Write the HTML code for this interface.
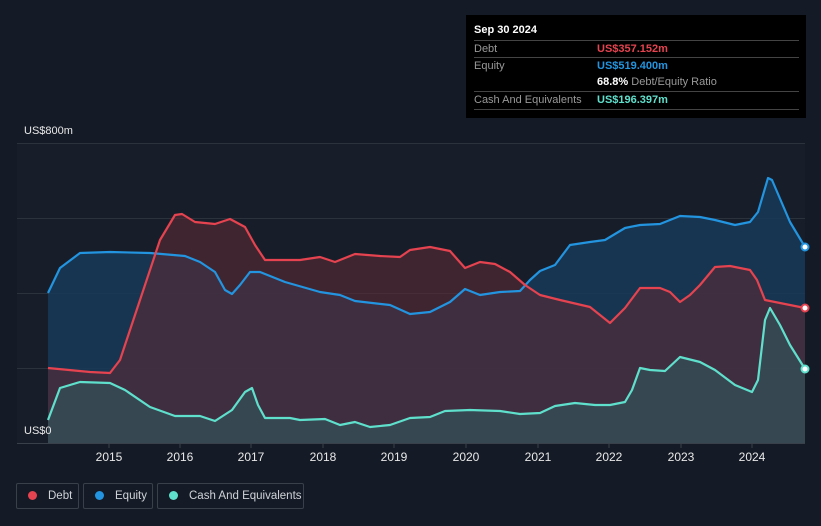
<!DOCTYPE html><html><head><style>
body{margin:0;width:821px;height:526px;background:#151b26;font-family:"Liberation Sans",sans-serif;overflow:hidden;position:relative}
.t{position:absolute;color:#e8e8e8;font-size:11px}
.tip{position:absolute;left:466px;top:15px;width:340px;height:103px;background:#000;}
.tip .r{position:absolute;left:8px;width:325px;border-top:1px solid #444;font-size:11px;color:#999;height:17px;line-height:17px}
.leg{position:absolute;top:483px;height:26px;border:1px solid #3a404a;border-radius:2px;color:#cfd3d8;font-size:11.5px;line-height:24px;box-sizing:border-box;white-space:nowrap;overflow:hidden}
.dot{display:inline-block;width:9px;height:9px;border-radius:50%;margin:0 11px 0 11px;vertical-align:-1px}
</style></head><body>
<svg width="821" height="526" style="position:absolute;left:0;top:0">
<rect x="17" y="143" width="788" height="300" fill="#181e29"/>
<g stroke="#2c323c" stroke-width="1"><line x1="17" y1="143.5" x2="805" y2="143.5"/><line x1="17" y1="218.5" x2="805" y2="218.5"/><line x1="17" y1="293.5" x2="805" y2="293.5"/><line x1="17" y1="368.5" x2="805" y2="368.5"/></g>
<path fill="#173a57" fill-opacity="0.85" d="M48,443 L48,293 L60,268 L80,253 L110,252 L150,253 L185,256 L200,262 L215,272 L225,290 L232,294 L240,285 L250,272 L260,272 L285,282 L320,292 L340,295 L355,301 L390,305 L410,314 L430,312 L450,302 L465,289 L480,295 L500,292 L520,291 L530,280 L540,271 L555,265 L570,245 L590,242 L605,240 L625,228 L640,225 L660,224 L680,216 L700,217 L715,220 L735,225 L750,222 L758,212 L768,178 L772,180 L790,222 L805,247 L805,443Z"/>
<path fill="#5a2a35" fill-opacity="0.6" d="M48,443 L48,368 L90,372 L110,373 L120,360 L140,300 L160,240 L175,215 L182,214 L195,222 L215,224 L230,219 L245,227 L255,245 L265,260 L300,260 L320,257 L335,262 L355,254 L380,256 L400,257 L410,250 L430,247 L450,251 L465,268 L480,262 L495,264 L510,272 L525,285 L540,295 L560,300 L590,307 L610,323 L625,308 L640,288 L660,288 L670,292 L680,302 L690,295 L700,285 L715,267 L730,266 L750,270 L757,280 L765,300 L785,304 L805,308 L805,443Z"/>
<path fill="#35525a" fill-opacity="0.7" d="M48,443 L48,420 L60,388 L80,382 L110,383 L125,390 L150,407 L175,416 L200,416 L215,421 L232,410 L245,392 L252,388 L258,405 L265,418 L290,418 L300,420 L325,419 L340,425 L355,422 L370,427 L390,425 L410,418 L430,417 L445,411 L470,410 L500,411 L520,414 L540,413 L555,406 L575,403 L595,405 L610,405 L625,402 L632,390 L640,368 L650,370 L665,371 L680,357 L700,362 L715,370 L735,385 L752,392 L758,380 L765,320 L770,308 L780,325 L790,345 L805,369 L805,443Z"/>
<g fill="none" stroke-width="2.2" stroke-linejoin="round">
<path stroke="#2394df" d="M48,293 L60,268 L80,253 L110,252 L150,253 L185,256 L200,262 L215,272 L225,290 L232,294 L240,285 L250,272 L260,272 L285,282 L320,292 L340,295 L355,301 L390,305 L410,314 L430,312 L450,302 L465,289 L480,295 L500,292 L520,291 L530,280 L540,271 L555,265 L570,245 L590,242 L605,240 L625,228 L640,225 L660,224 L680,216 L700,217 L715,220 L735,225 L750,222 L758,212 L768,178 L772,180 L790,222 L805,247"/>
<path stroke="#e4434f" d="M48,368 L90,372 L110,373 L120,360 L140,300 L160,240 L175,215 L182,214 L195,222 L215,224 L230,219 L245,227 L255,245 L265,260 L300,260 L320,257 L335,262 L355,254 L380,256 L400,257 L410,250 L430,247 L450,251 L465,268 L480,262 L495,264 L510,272 L525,285 L540,295 L560,300 L590,307 L610,323 L625,308 L640,288 L660,288 L670,292 L680,302 L690,295 L700,285 L715,267 L730,266 L750,270 L757,280 L765,300 L785,304 L805,308"/>
<path stroke="#5fe0cc" d="M48,420 L60,388 L80,382 L110,383 L125,390 L150,407 L175,416 L200,416 L215,421 L232,410 L245,392 L252,388 L258,405 L265,418 L290,418 L300,420 L325,419 L340,425 L355,422 L370,427 L390,425 L410,418 L430,417 L445,411 L470,410 L500,411 L520,414 L540,413 L555,406 L575,403 L595,405 L610,405 L625,402 L632,390 L640,368 L650,370 L665,371 L680,357 L700,362 L715,370 L735,385 L752,392 L758,380 L765,320 L770,308 L780,325 L790,345 L805,369"/>
</g>
<circle cx="805" cy="247" r="3.5" fill="#fff" stroke="#2394df" stroke-width="2"/>
<circle cx="805" cy="308" r="3.5" fill="#fff" stroke="#e4434f" stroke-width="2"/>
<circle cx="805" cy="369" r="3.5" fill="#fff" stroke="#5fe0cc" stroke-width="2"/>
<line x1="17" y1="443.5" x2="805" y2="443.5" stroke="#3a404a"/>
<g stroke="#3a404a"><line x1="109" y1="443" x2="109" y2="448"/><line x1="180" y1="443" x2="180" y2="448"/><line x1="251" y1="443" x2="251" y2="448"/><line x1="323" y1="443" x2="323" y2="448"/><line x1="394" y1="443" x2="394" y2="448"/><line x1="466" y1="443" x2="466" y2="448"/><line x1="538" y1="443" x2="538" y2="448"/><line x1="609" y1="443" x2="609" y2="448"/><line x1="681" y1="443" x2="681" y2="448"/><line x1="752" y1="443" x2="752" y2="448"/></g>
<g fill="#e8e8e8" font-size="12" text-anchor="middle" font-family="Liberation Sans"><text x="109" y="461">2015</text><text x="180" y="461">2016</text><text x="251" y="461">2017</text><text x="323" y="461">2018</text><text x="394" y="461">2019</text><text x="466" y="461">2020</text><text x="538" y="461">2021</text><text x="609" y="461">2022</text><text x="681" y="461">2023</text><text x="752" y="461">2024</text></g>
</svg>
<div class="t" style="left:24px;top:125px">US$800m</div>
<div class="t" style="left:24px;top:425px">US$0</div>
<div class="tip">
<div style="position:absolute;left:8px;top:9px;color:#fff;font-size:11px;font-weight:bold">Sep 30 2024</div>
<div class="r" style="top:25px">Debt<span style="position:absolute;left:123px;color:#e4434f;font-weight:bold">US$357.152m</span></div>
<div class="r" style="top:42px">Equity<span style="position:absolute;left:123px;color:#2394df;font-weight:bold">US$519.400m</span></div>
<div class="r" style="top:59px;border-top:none"><span style="position:absolute;left:123px"><b style="color:#fff">68.8%</b> Debt/Equity Ratio</span></div>
<div class="r" style="top:76px">Cash And Equivalents<span style="position:absolute;left:123px;color:#5fe0cc;font-weight:bold">US$196.397m</span></div>
<div class="r" style="top:94px;height:0"></div>
</div>
<div class="leg" style="left:16px;width:63px"><span class="dot" style="background:#e4434f"></span>Debt</div>
<div class="leg" style="left:83px;width:70px"><span class="dot" style="background:#2394df"></span>Equity</div>
<div class="leg" style="left:157px;width:147px"><span class="dot" style="background:#5fe0cc"></span>Cash And Equivalents</div>
</body></html>
